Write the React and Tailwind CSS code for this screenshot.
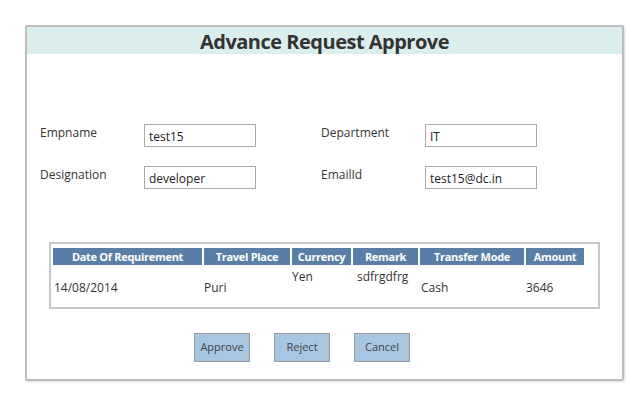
import React from 'react';

const cols = [
  { title: 'Date Of Requirement', w: 'w-[149px]', value: '14/08/2014', top: false, pl: 'pl-[1px]' },
  { title: 'Travel Place', w: 'w-[86px]', value: 'Puri', top: false, pl: 'pl-0' },
  { title: 'Currency', w: 'w-[59px]', value: 'Yen', top: true, pl: 'pl-0' },
  { title: 'Remark', w: 'w-[65px]', value: 'sdfrgdfrg', top: true, pl: 'pl-[4px]' },
  { title: 'Transfer Mode', w: 'w-[104px]', value: 'Cash', top: false, pl: 'pl-[1px]' },
  { title: 'Amount', w: 'w-[58px]', value: '3646', top: false, pl: 'pl-0' },
];

function Field({ label, value }) {
  return (
    <div className="flex items-center">
      <div className="w-[104px] text-[12px] text-[#333] -mt-[6px]">{label}</div>
      <div className="w-[112px] h-[23px] border border-[#a9a9a9] flex items-center px-[4px] pt-[2px] text-[12px] text-[#222]">
        {value}
      </div>
    </div>
  );
}

export default function App() {
  return (
    <div className="w-[644px] h-[394px] bg-white pt-[25px] pl-[25px] font-['Open_Sans',sans-serif]">
      <div className="w-[599px] h-[356px] border-2 border-[#bdbdbd] rounded-[2px] shadow-[1px_1px_2px_rgba(0,0,0,0.15)] flex flex-col">
        {/* Header */}
        <div className="h-[27px] bg-[#d9eeed] flex items-center justify-center">
          <h1 className="text-[20px] font-bold text-[#333] tracking-[-0.5px] leading-none pt-[2px]">Advance Request Approve</h1>
        </div>

        {/* Form */}
        <div className="pl-[13px] pt-[70px] flex gap-[65px]">
          <div className="flex flex-col gap-[19px]">
            <Field label="Empname" value="test15" />
            <Field label="Designation" value="developer" />
          </div>
          <div className="flex flex-col gap-[19px]">
            <Field label="Department" value="IT" />
            <Field label="EmailId" value="test15@dc.in" />
          </div>
        </div>

        {/* Table */}
        <div className="ml-[22px] mt-[53px] w-[551px] h-[67px] border-2 border-[#c8c8c8] pt-[4px] pl-[2px]">
          <div className="flex gap-[2px]">
            {cols.map((c) => (
              <div key={c.title} className={`${c.w} flex flex-col`}>
                <div className="h-[17px] bg-[#5b7ea6] text-white text-[11px] font-bold tracking-[-0.3px] flex items-center justify-center leading-none">
                  {c.title}
                </div>
                <div className={`h-[38px] flex ${c.top ? 'items-start pt-[3px]' : 'items-center pt-[7px]'} ${c.pl} text-[12px] text-[#333]`}>
                  {c.value}
                </div>
              </div>
            ))}
          </div>
        </div>

        {/* Buttons */}
        <div className="flex pl-[167px] mt-[24px] gap-[24px]">
          {['Approve', 'Reject', 'Cancel'].map((b) => (
            <button
              key={b}
              className="h-[29px] w-[56px] bg-[#a8c5e2] border border-[#9a9a9a] text-[11px] text-[#444] font-['Open_Sans',sans-serif]"
            >
              {b}
            </button>
          ))}
        </div>
      </div>
    </div>
  );
}
